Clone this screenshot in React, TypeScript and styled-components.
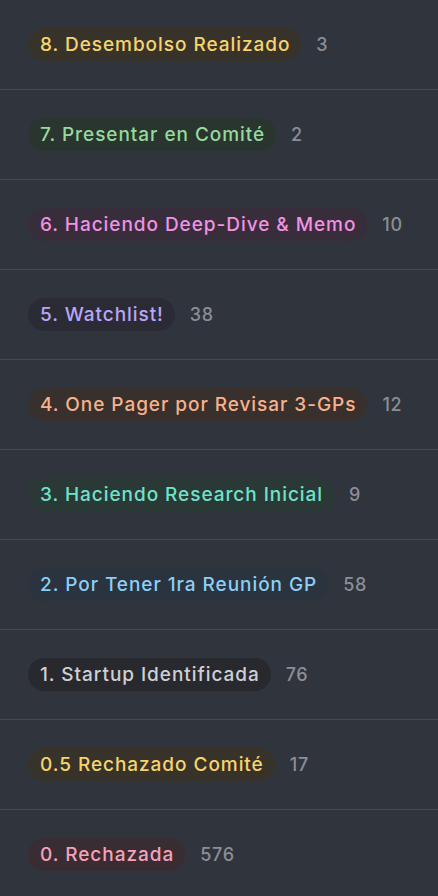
import React from "react";
import styled, { createGlobalStyle } from "styled-components";

const Global = createGlobalStyle`
  html, body { margin: 0; padding: 0; background: #30343c; }
  body { font-family: Inter, "Noto Sans", sans-serif; -webkit-font-smoothing: antialiased; }
`;

const List = styled.div`
  display: flex;
  flex-direction: column;
  background: #30343c;
  min-height: 896px;
`;

const Row = styled.div`
  display: flex;
  align-items: center;
  height: 89px;
  padding-left: 28px;
  border-bottom: 1px solid #464a52;
  box-sizing: content-box;
`;

const Pill = styled.span<{ $fg: string; $bg: string }>`
  display: inline-flex;
  align-items: center;
  height: 33px;
  padding: 0 11px 0 12px;
  border-radius: 17px;
  background: ${(p) => p.$bg};
  color: ${(p) => p.$fg};
  font-size: 19px;
  font-weight: 500;
  letter-spacing: 0.95px;
  white-space: nowrap;
`;

const Count = styled.span`
  margin-left: 15px;
  color: #8b8e95;
  font-size: 18px;
  font-weight: 500;
  letter-spacing: 0.7px;
`;

const stages = [
  { label: "8. Desembolso Realizado", count: 3, fg: "#f8d36c", bg: "#37332a" },
  { label: "7. Presentar en Comité", count: 2, fg: "#94da9c", bg: "#2a352f" },
  { label: "6. Haciendo Deep-Dive & Memo", count: 10, fg: "#f192e2", bg: "#382d3a" },
  { label: "5. Watchlist!", count: 38, fg: "#b9a6f6", bg: "#2b2b36" },
  { label: "4. One Pager por Revisar 3-GPs", count: 12, fg: "#f8b18b", bg: "#38302c" },
  { label: "3. Haciendo Research Inicial", count: 9, fg: "#70e2cb", bg: "#2a3935" },
  { label: "2. Por Tener 1ra Reunión GP", count: 58, fg: "#8ccff6", bg: "#2a333e" },
  { label: "1. Startup Identificada", count: 76, fg: "#cfd0d4", bg: "#28292e" },
  { label: "0.5 Rechazado Comité", count: 17, fg: "#f8d36c", bg: "#37332a" },
  { label: "0. Rechazada", count: 576, fg: "#f6a2ba", bg: "#3a2c33" },
];

export default function App() {
  return (
    <>
      <Global />
      <List>
        {stages.map((s) => (
          <Row key={s.label}>
            <Pill $fg={s.fg} $bg={s.bg}>{s.label}</Pill>
            <Count>{s.count}</Count>
          </Row>
        ))}
      </List>
    </>
  );
}
